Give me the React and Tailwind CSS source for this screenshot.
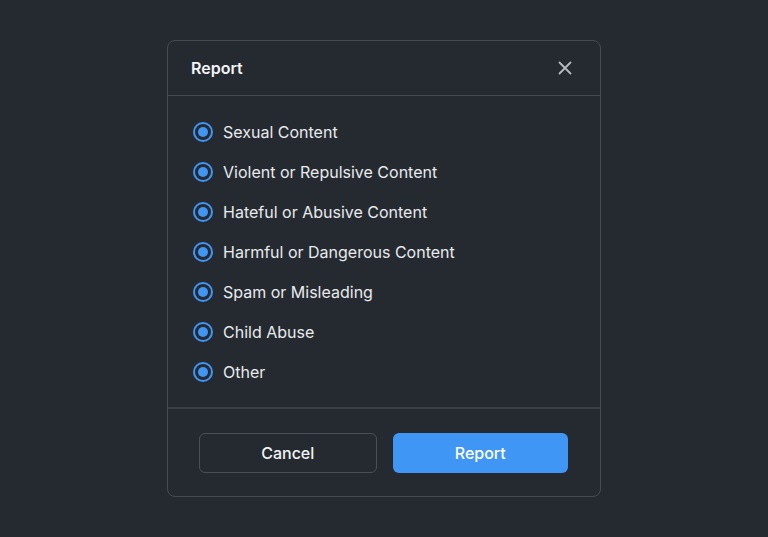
import React from "react";

const options = [
  "Sexual Content",
  "Violent or Repulsive Content",
  "Hateful or Abusive Content",
  "Harmful or Dangerous Content",
  "Spam or Misleading",
  "Child Abuse",
  "Other",
];

export default function App() {
  return (
    <div
      className="w-[768px] h-[537px] bg-[#252a31] flex items-start justify-center pt-10"
      style={{ fontFamily: "Inter, 'Noto Sans', sans-serif" }}
    >
      <div className="w-[434px] rounded-lg border border-[#464b52] bg-[#252a31] flex flex-col">
        <div className="h-[55px] flex items-center justify-between pl-[23px] pr-[27px] border-b border-[#464b52]">
          <span className="text-[16px] font-semibold text-[#f1f3f5]">Report</span>
          <svg width="16" height="16" viewBox="0 0 16 16" className="text-[#b5bac1]">
            <path d="M2.5 2.5L13.5 13.5M13.5 2.5L2.5 13.5" stroke="currentColor" strokeWidth="1.8" strokeLinecap="round" />
          </svg>
        </div>
        <div className="flex flex-col pt-4 pb-[15px] pl-[25px] pr-6 border-b-2 border-[#3a3f46]">
          {options.map((o) => (
            <label key={o} className="h-10 flex items-center gap-[10px]">
              <span className="w-5 h-5 rounded-full border-2 border-[#4096f5] flex items-center justify-center">
                <span className="w-[10px] h-[10px] rounded-full bg-[#4096f5]" />
              </span>
              <span className="text-[16px] text-[#e8eaed]">{o}</span>
            </label>
          ))}
        </div>
        <div className="flex gap-4 pl-[31px] pr-8 pt-6 pb-[23px]">
          <button className="flex-1 h-10 rounded-md border border-[#4a4f56] text-[16px] font-medium text-[#f1f3f5]">
            Cancel
          </button>
          <button className="flex-1 h-10 rounded-md bg-[#4096f5] text-[16px] font-medium text-white">
            Report
          </button>
        </div>
      </div>
    </div>
  );
}
